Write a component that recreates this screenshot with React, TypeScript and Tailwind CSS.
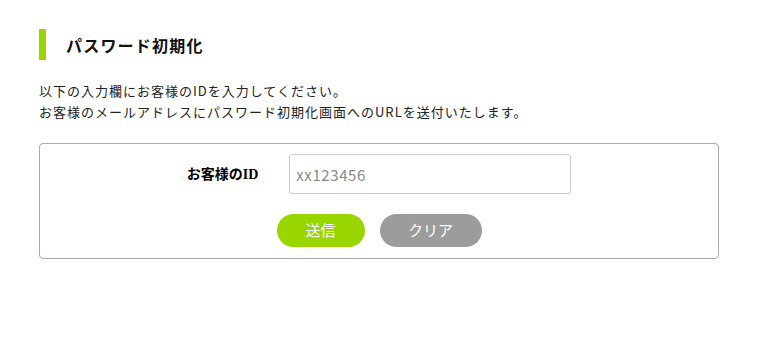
export default function App() {
  return (
    <div className="min-h-[337px] w-full bg-white px-[39px] pt-[29px] text-[#222] [font-family:'Noto_Sans_CJK_JP',sans-serif]">
      {/* 見出し */}
      <div className="flex h-[31px] items-center border-l-[7px] border-[#99d600] pl-[20px]">
        <h1 className="text-[16px] font-bold tracking-[1.2px] text-[#111]">パスワード初期化</h1>
      </div>

      {/* 説明文 */}
      <div className="mt-[20px] text-[13px] leading-[21px] tracking-[1px]">
        <p>以下の入力欄にお客様のIDを入力してください。</p>
        <p>お客様のメールアドレスにパスワード初期化画面へのURLを送付いたします。</p>
      </div>

      {/* フォーム */}
      <div className="mt-[21px] flex h-[116px] w-[680px] flex-col items-center rounded-[4px] border border-[#aaa] pt-[10px]">
        <div className="flex items-center gap-[31px]">
          <label className="text-[14px] font-bold text-black [font-family:'Liberation_Serif','Noto_Sans_CJK_JP',serif]">
            お客様のID
          </label>
          <input
            type="text"
            placeholder="xx123456"
            className="h-[40px] w-[282px] rounded-[3px] border border-[#ccc] px-[6px] text-[15px] tracking-[0.6px] placeholder:text-[#888] focus:outline-none"
          />
        </div>
        <div className="mt-[20px] flex gap-[15px]">
          <button className="h-[33px] w-[88px] rounded-full bg-[#99d600] text-[15px] text-white">送信</button>
          <button className="h-[33px] w-[102px] rounded-full bg-[#9c9c9c] text-[15px] text-white">クリア</button>
        </div>
      </div>
    </div>
  );
}
